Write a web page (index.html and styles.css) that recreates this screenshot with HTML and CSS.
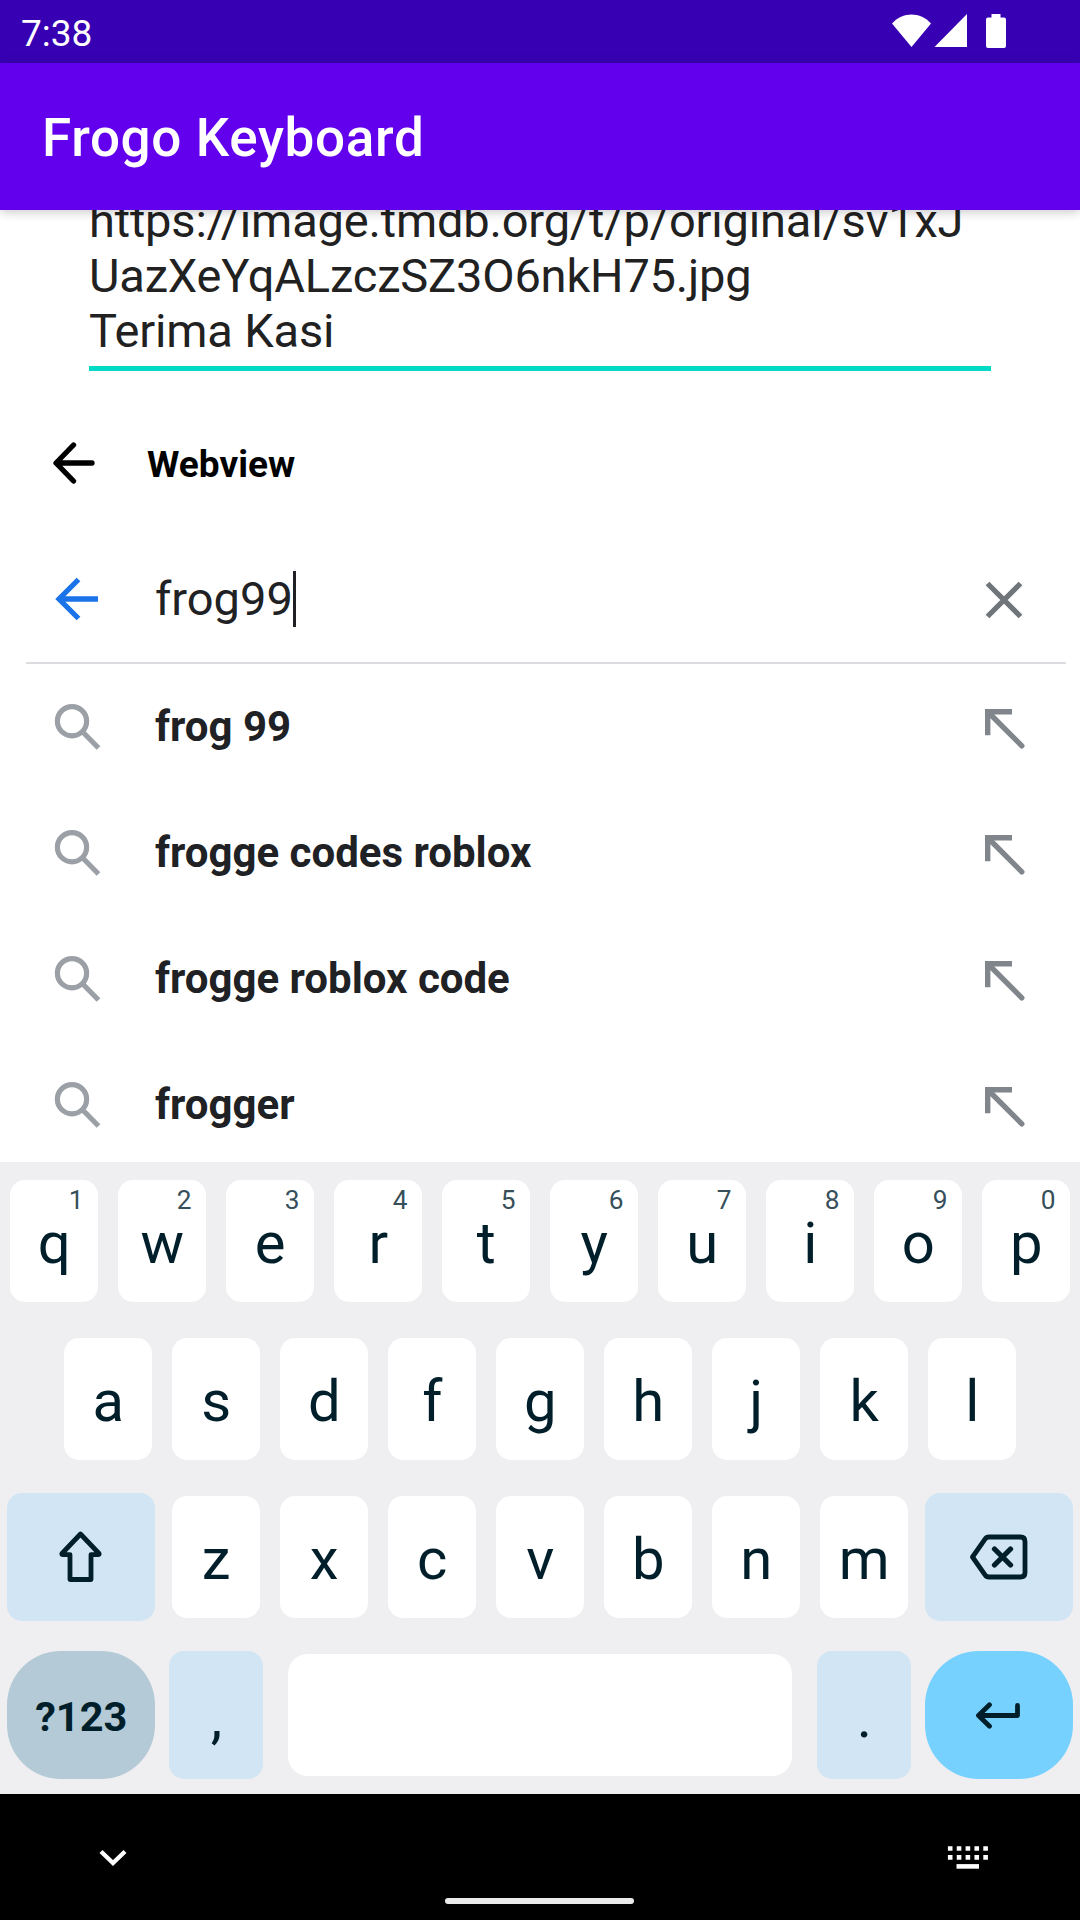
FILE: index.html
```html
<!DOCTYPE html>
<html lang="en">
<head>
<meta charset="utf-8">
<title>Frogo Keyboard</title>
<link rel="stylesheet" href="styles.css">
</head>
<body>
<svg class="defs" width="0" height="0">
  <symbol id="search" viewBox="0 0 48 48"><circle cx="18" cy="18.2" r="14.6"/><path d="M28.5 28.7 44.5 45"/></symbol>
  <symbol id="insert" viewBox="0 0 40 40"><path d="M27 2.7H2.7V26.3"/><path d="M4 4 36.8 36.8" stroke-linecap="round"/></symbol>
</svg>
<div class="screen">
  <header class="status">
    <span class="clock">7:38</span>
    <svg class="status-icons" width="116" height="36" viewBox="0 0 116 36">
      <path d="M0 9.5C10.5-2.5 28.500-2.5 39 9.5L19.500 33Z"/>
      <path d="M75 0V33H42.500Z"/>
      <path d="M99.500 0h9v3.500h3.500a2 2 0 0 1 2 2V32a2 2 0 0 1-2 2H96a2 2 0 0 1-2-2V5.500a2 2 0 0 1 2-2h3.500Z"/>
    </svg>
  </header>
  <div class="appbar"><h1>Frogo Keyboard</h1></div>

  <main class="content">
    <div class="editor">
      <p>https://image.tmdb.org/t/p/original/sv1xJ<br>UazXeYqALzczSZ3O6nkH75.jpg<br>Terima Kasi</p>
    </div>
    <div class="webview-bar">
      <svg class="back" width="42" height="42" viewBox="0 0 42 42"><path d="M39 21H4M20.500 3 3 21 20.500 39"/></svg>
      <h2>Webview</h2>
    </div>
    <div class="search-bar">
      <svg class="blue" width="44" height="44" viewBox="0 0 44 44"><path d="M43 22H4M23.500 2.500 4 22 23.500 41.500"/></svg>
      <span class="query">frog99</span><i class="caret"></i>
      <svg class="clear" width="38" height="38" viewBox="0 0 38 38"><path d="M2.500 2.500 35.500 35.500M35.500 2.500 2.500 35.500"/></svg>
    </div>
    <ul class="suggestions">
      <li><svg class="glass"><use href="#search"/></svg><span>frog 99</span><svg class="insert"><use href="#insert"/></svg></li>
      <li><svg class="glass"><use href="#search"/></svg><span>frogge codes roblox</span><svg class="insert"><use href="#insert"/></svg></li>
      <li><svg class="glass"><use href="#search"/></svg><span>frogge roblox code</span><svg class="insert"><use href="#insert"/></svg></li>
      <li><svg class="glass"><use href="#search"/></svg><span>frogger</span><svg class="insert"><use href="#insert"/></svg></li>
    </ul>
  </main>

  <section class="keyboard">
    <div class="row">
      <div class="key">q<sup>1</sup></div><div class="key">w<sup>2</sup></div><div class="key">e<sup>3</sup></div><div class="key">r<sup>4</sup></div><div class="key">t<sup>5</sup></div><div class="key">y<sup>6</sup></div><div class="key">u<sup>7</sup></div><div class="key">i<sup>8</sup></div><div class="key">o<sup>9</sup></div><div class="key">p<sup>0</sup></div>
    </div>
    <div class="row">
      <div class="key">a</div><div class="key">s</div><div class="key">d</div><div class="key">f</div><div class="key">g</div><div class="key">h</div><div class="key">j</div><div class="key">k</div><div class="key">l</div>
    </div>
    <div class="row edge">
      <div class="key fn wide">
        <svg width="44" height="52" viewBox="0 0 44 52"><path d="M21.500 3 3 22.500Q2.500 23.700 4 23.700H11V48.500H32V23.700H39Q40.500 23.700 40 22.500Z"/></svg>
      </div>
      <div class="letters"><div class="key">z</div><div class="key">x</div><div class="key">c</div><div class="key">v</div><div class="key">b</div><div class="key">n</div><div class="key">m</div></div>
      <div class="key fn wide">
        <svg class="del" width="58" height="46" viewBox="0 0 58 46"><path d="M2.500 23 15 5.200Q16.500 3 19 3H50.500Q55 3 55 7.500V38.500Q55 43 50.500 43H19Q16.500 43 15 40.800Z"/><path class="bold" d="M24.500 15 40.500 31M40.500 15 24.500 31"/></svg>
      </div>
    </div>
    <div class="row edge">
      <div class="key fn wide mode">?123</div>
      <div class="key fn punct">,</div>
      <div class="key space"></div>
      <div class="key fn punct">.</div>
      <div class="key fn wide enter">
        <svg width="46" height="28" viewBox="0 0 46 28"><path d="M42.500 4.500V14.500H4M14.500 3.800 3.500 14.500 14.500 25.200"/></svg>
      </div>
    </div>
  </section>

  <footer class="nav">
    <svg class="chevron" width="28" height="18" viewBox="0 0 28 18"><path d="M2 2.500 14 14 26 2.500"/></svg>
    <i class="handle"></i>
    <svg class="kb" width="42" height="24" viewBox="0 0 42 24"><path d="M.9 2.500H42M.9 11.400H42" stroke-dasharray="4.600 4.250"/><path d="M9.500 20.400H32"/></svg>
  </footer>
</div>
</body>
</html>
```
FILE: styles.css
```css
* { box-sizing: border-box; margin: 0; padding: 0; }
body { width: 1080px; height: 1920px; overflow: hidden; background: #fff; font-family: Roboto, "Liberation Sans", sans-serif; }
svg { display: block; flex: none; fill: none; }
.defs { position: absolute; }
.screen { display: flex; flex-direction: column; height: 1920px; }

.status { height: 63px; background: #3700b3; color: #fff; display: flex; justify-content: space-between; padding: 0 72px 0 21px; }
.clock { font-size: 37px; line-height: 67px; }
.status-icons { margin-top: 14px; fill: #fff; }

.appbar { height: 147px; background: #6200ee; color: #fff; padding-left: 42px; z-index: 1; box-shadow: 0 2px 10px rgba(0, 0, 0, .22); }
.appbar h1 { font-size: 53px; font-weight: 500; line-height: 151px; letter-spacing: .65px; }

.content { height: 952px; overflow: hidden; }
.editor { height: 161px; margin: 0 89px; display: flex; flex-direction: column; justify-content: flex-end; overflow: hidden; border-bottom: 5px solid #03dac5; padding-bottom: 8px; color: #212121; }
.editor p { font-size: 47px; line-height: 55px; letter-spacing: -.18px; }

.webview-bar { height: 184px; display: flex; align-items: center; padding-left: 53px; gap: 52px; color: #000; }
.webview-bar h2 { font-size: 37px; font-weight: 700; line-height: 44px; padding-top: 3px; }
.back { stroke: #000; stroke-width: 5.300px; stroke-linecap: round; stroke-linejoin: round; }

.search-bar { height: 109px; margin: 0 14px 0 26px; border-bottom: 2px solid #dadce0; display: flex; align-items: flex-start; padding: 16px 43px 0 29px; color: #202124; }
.blue { stroke: #1a73e8; stroke-width: 5.300px; margin-top: 6px; }
.query { font-size: 47px; line-height: 56px; margin-left: 56px; }
.caret { width: 3px; height: 56px; background: #202124; }
.clear { margin: 9.5px 0 0 auto; stroke: #70757a; stroke-width: 5.300px; }

.suggestions { list-style: none; }
.suggestions li { height: 126px; display: flex; align-items: center; padding: 0 55px 0 54px; color: #202124; }
.suggestions span { font-size: 42px; font-weight: 700; line-height: 50px; margin: 0 0 0 53px; flex: 1; }
.glass { width: 48px; height: 48px; stroke: #9aa0a6; stroke-width: 5.200px; margin-top: -1px; }
.insert { width: 40px; height: 40px; stroke: #80868b; stroke-width: 5.400px; margin-top: 4px; }

.keyboard { height: 632px; background: #efeff1; padding-top: 18px; display: flex; flex-direction: column; gap: 36px; color: #001f2a; }
.row { height: 122px; display: flex; justify-content: center; gap: 20px; }
.edge { justify-content: space-between; align-items: center; padding: 0 7px; gap: 0; }
.letters { display: flex; gap: 20px; }
.key { position: relative; width: 88px; height: 122px; border-radius: 15px; background: #fff; display: flex; justify-content: center; align-items: center; padding: 4px 0 0 .5px; font-size: 58px; line-height: 68px; }
.key sup { position: absolute; top: 5px; right: 14.5px; font-size: 26.25px; line-height: 30px; color: #374f5a; }
.fn { height: 128px; background: #d2e5f5; }
.wide { width: 148px; padding-top: 0; }
.key svg { stroke: #001f2a; stroke-width: 4.800px; stroke-linecap: round; stroke-linejoin: round; }
.key .del { margin-left: -1px; }
.bold { stroke-width: 5.300px; }
.mode { background: #b4cad6; border-radius: 54px; font-size: 41.5px; font-weight: 700; padding-top: 3px; }
.punct { width: 94px; padding-left: 1px; }
.space { width: 504px; border-radius: 20px; margin: 0 11px; }
.enter { background: #76d1ff; border-radius: 54px; padding-right: 2px; }

.nav { height: 126px; background: #000; display: flex; justify-content: space-between; align-items: flex-start; padding: 0 91px 0 99px; }
.chevron { margin-top: 55px; stroke: #fff; stroke-width: 4.300px; }
.kb { margin-top: 51.5px; stroke: #fff; stroke-width: 4.600px; }
.handle { width: 189px; height: 6px; margin-top: 104px; margin-left: 5px; border-radius: 3px; background: #ebebeb; }
```
